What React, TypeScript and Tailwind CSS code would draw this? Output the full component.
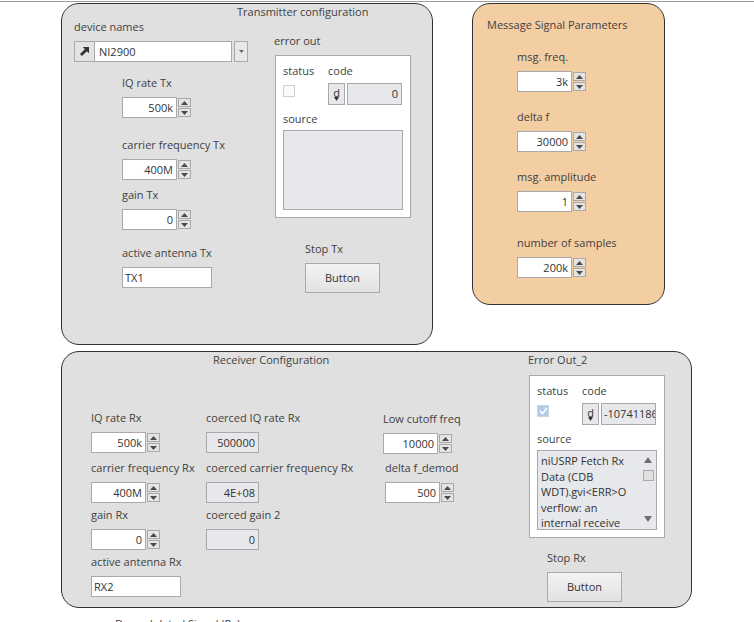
import React from 'react'

type Cls = { className?: string }

function Label({ children, className = '' }: { children: React.ReactNode } & Cls) {
  return <div className={`h-4 whitespace-nowrap leading-4 ${className}`}>{children}</div>
}

function SpinBtn({ up }: { up?: boolean }) {
  return (
    <div className="flex h-[9px] w-[13px] items-center justify-center border border-[#a9a9a9] bg-[#e4e4e4]">
      <svg width="7" height="4" viewBox="0 0 7 4">
        <path d={up ? 'M0 4 L3.5 0 L7 4 Z' : 'M0 0 L7 0 L3.5 4 Z'} fill="#4a4a4a" />
      </svg>
    </div>
  )
}

function Numeric({ value, className = '' }: { value: string } & Cls) {
  return (
    <div className={`flex items-start ${className}`}>
      <div className="h-[21px] w-[55px] border border-[#a9a9a9] bg-white pr-[3px] text-right leading-[19px] text-[#333]">
        {value}
      </div>
      <div className="ml-px mt-px flex flex-col gap-px">
        <SpinBtn up />
        <SpinBtn />
      </div>
    </div>
  )
}

function Indicator({ value, className = '' }: { value: string } & Cls) {
  return (
    <div className={`h-[21px] w-[53px] border border-[#a9a9a9] bg-[#e6e8eb] pr-[3px] text-right leading-[19px] text-[#333] ${className}`}>
      {value}
    </div>
  )
}

function StringBox({ value, className = '' }: { value: string } & Cls) {
  return (
    <div className={`h-[21px] w-[90px] border border-[#a9a9a9] bg-white pl-[2px] leading-[19px] text-[#333] ${className}`}>
      {value}
    </div>
  )
}

function Btn({ className = '' }: Cls) {
  return (
    <div className={`flex h-[30px] w-[75px] items-center justify-center border border-[#a9a9a9] bg-linear-to-b from-[#f3f3f3] to-[#e2e2e2] text-[#333] ${className}`}>
      Button
    </div>
  )
}

function Combo({ className = '' }: Cls) {
  return (
    <div className={`flex items-start ${className}`}>
      <div className="flex h-[21px] w-[21px] items-center justify-center border border-[#a9a9a9] bg-[#e3e3e3]">
        <svg width="9" height="9" viewBox="0 0 10 10">
          <path d="M3 0 H10 V7 L7.6 4.6 L2.1 10 L0 7.9 L5.4 2.4 Z" fill="#333" />
        </svg>
      </div>
      <div className="-ml-px h-[21px] w-[138px] border border-[#a9a9a9] bg-white pl-[4px] leading-[19px] text-[#333]">
        NI2900
      </div>
      <div className="ml-[2px] flex h-[21px] w-[14px] items-center justify-center border border-[#a9a9a9] bg-[#e8e8e8]">
        <svg width="5" height="3" viewBox="0 0 5 3">
          <path d="M0 0 H5 L2.5 3 Z" fill="#666" />
        </svg>
      </div>
    </div>
  )
}

function ErrorCluster({ checked, code, source }: { checked?: boolean; code: string; source?: string[] }) {
  return (
    <div className="h-[163px] w-[136px] border border-[#a9a9a9] bg-white pl-[7px] pt-[7px]">
      <div className="flex items-start">
        <div className="w-[45px]">
          <Label>status</Label>
          {checked ? (
            <div className="mt-[6px] flex h-[12px] w-[12px] items-center justify-center border border-[#c3d6ea] bg-[#b3cde8]">
              <svg width="9" height="8" viewBox="0 0 9 8">
                <path d="M1 4.2 L3.4 6.5 L8 1" stroke="#fff" strokeWidth="1.6" fill="none" />
              </svg>
            </div>
          ) : (
            <div className="mt-[6px] h-[12px] w-[12px] border border-[#cfcfcf] bg-[#fafafa]" />
          )}
        </div>
        <div>
          <Label>code</Label>
          <div className="mt-[4px] flex gap-[2px]">
            <div className="flex h-[22px] w-[17px] flex-col items-center justify-end border border-[#a9a9a9] bg-[#e6e8eb] pb-[3px]">
              <span className="leading-[9px] text-[#333]">d</span>
              <svg width="5" height="4" viewBox="0 0 5 4">
                <path d="M0 0 H5 L2.5 4 Z" fill="#333" />
              </svg>
            </div>
            <div
              className={`h-[22px] w-[55px] overflow-hidden whitespace-nowrap border border-[#a9a9a9] bg-[#e6e8eb] leading-[20px] text-[#333] ${
                source ? 'pl-[2px] text-left' : 'pr-[3px] text-right'
              }`}
            >
              {code}
            </div>
          </div>
        </div>
      </div>
      <Label className="mt-[6px]">source</Label>
      <div className="mt-[3px] flex h-[80px] w-[120px] border border-[#a9a9a9] bg-[#e6e8eb]">
        {source && (
          <>
            <div className="flex-1 overflow-hidden pl-[3px] pt-[2px] leading-[15.5px] text-[#333]">
              {source.map(l => (
                <div key={l} className="whitespace-nowrap">{l}</div>
              ))}
            </div>
            <div className="flex w-[14px] flex-col items-center pr-[2px]">
              <svg className="mt-[6px]" width="8" height="6" viewBox="0 0 8 6">
                <path d="M0 6 L4 0 L8 6 Z" fill="#6e6e6e" />
              </svg>
              <div className="mt-[7px] h-[11px] w-[11px] border border-[#a9a9a9] bg-[#e0e0e0]" />
              <svg className="mt-[35px]" width="8" height="6" viewBox="0 0 8 6">
                <path d="M0 0 H8 L4 6 Z" fill="#6e6e6e" />
              </svg>
            </div>
          </>
        )}
      </div>
    </div>
  )
}

function TxPanel() {
  return (
    <div className="ml-[61px] h-[342px] w-[372px] rounded-[18px] border border-[#333] bg-[#e0e0e0]">
      <div className="h-[15px] pl-[175px]">
        <Label>Transmitter configuration</Label>
      </div>
      <div className="flex items-start">
        <div className="ml-[12px] w-[174px]">
          <Label>device names</Label>
          <Combo className="mt-[6px]" />
          <div className="ml-[48px]">
            <Label className="mt-[13px]">IQ rate Tx</Label>
            <Numeric value="500k" className="mt-[6px]" />
            <Label className="mt-[19px]">carrier frequency Tx</Label>
            <Numeric value="400M" className="mt-[6px]" />
            <Label className="mt-[7px]">gain Tx</Label>
            <Numeric value="0" className="mt-[6px]" />
            <Label className="mt-[15px]">active antenna Tx</Label>
            <StringBox value="TX1" className="mt-[6px]" />
          </div>
        </div>
        <div className="ml-[26px] mt-[14px]">
          <Label>error out</Label>
          <div className="ml-px mt-[6px]">
            <ErrorCluster code="0" />
          </div>
          <div className="ml-[31px] mt-[23px]">
            <Label>Stop Tx</Label>
            <Btn className="mt-[6px]" />
          </div>
        </div>
      </div>
    </div>
  )
}

function MsgPanel() {
  return (
    <div className="ml-[39px] h-[302px] w-[193px] rounded-[18px] border border-[#333] bg-[#f4cea3] pt-[13px]">
      <Label className="ml-[14px]">Message Signal Parameters</Label>
      <div className="ml-[44px] flex flex-col">
        <Label className="mt-[16px]">msg. freq.</Label>
        <Numeric value="3k" className="mt-[6px]" />
        <Label className="mt-[17px]">delta f</Label>
        <Numeric value="30000" className="mt-[6px]" />
        <Label className="mt-[17px]">msg. amplitude</Label>
        <Numeric value="1" className="mt-[6px]" />
        <Label className="mt-[23px]">number of samples</Label>
        <Numeric value="200k" className="mt-[6px]" />
      </div>
    </div>
  )
}

function RxPanel() {
  return (
    <div className="ml-[61px] mt-[6px] flex h-[257px] w-[631px] items-start rounded-[18px] border border-[#333] bg-[#e0e0e0]">
      <div className="w-[466px]">
        <Label className="ml-[151px]">Receiver Configuration</Label>
        <div className="flex items-start">
          <div className="ml-[29px] flex w-[115px] flex-col">
            <Label className="mt-[42px]">IQ rate Rx</Label>
            <Numeric value="500k" className="mt-[6px]" />
            <Label className="mt-[7px]">carrier frequency Rx</Label>
            <Numeric value="400M" className="mt-[6px]" />
            <Label className="mt-[4px]">gain Rx</Label>
            <Numeric value="0" className="mt-[6px]" />
            <Label className="mt-[4px]">active antenna Rx</Label>
            <StringBox value="RX2" className="mt-[6px]" />
          </div>
          <div className="flex w-[177px] flex-col">
            <Label className="mt-[42px]">coerced IQ rate Rx</Label>
            <Indicator value="500000" className="mt-[6px]" />
            <Label className="mt-[7px]">coerced carrier frequency Rx</Label>
            <Indicator value="4E+08" className="mt-[6px]" />
            <Label className="mt-[4px]">coerced gain 2</Label>
            <Indicator value="0" className="mt-[6px]" />
          </div>
          <div className="flex flex-col">
            <Label className="mt-[43px]">Low cutoff freq</Label>
            <Numeric value="10000" className="mt-[6px]" />
            <Label className="ml-[2px] mt-[6px]">delta f_demod</Label>
            <Numeric value="500" className="ml-[2px] mt-[6px]" />
          </div>
        </div>
      </div>
      <div className="flex flex-col">
        <Label>Error Out_2</Label>
        <div className="ml-px mt-[7px]">
          <ErrorCluster
            checked
            code="-1074118614"
            source={['niUSRP Fetch Rx', 'Data (CDB', 'WDT).gvi<ERR>O', 'verflow: an', 'internal receive']}
          />
        </div>
        <div className="ml-[19px] mt-[12px]">
          <Label>Stop Rx</Label>
          <Btn className="mt-[6px]" />
        </div>
      </div>
    </div>
  )
}

export default function App() {
  return (
    <div className="h-[622px] w-[754px] overflow-hidden bg-white font-['Open_Sans',sans-serif] text-[11px] text-[#3f3f3f]">
      <div className="mt-px h-px bg-[#9c9c9c]" />
      <div className="mt-px flex items-start">
        <TxPanel />
        <MsgPanel />
      </div>
      <RxPanel />
      <div className="ml-[115px] mt-[8px] leading-4">Demodulated Signal (Rx)</div>
    </div>
  )
}
